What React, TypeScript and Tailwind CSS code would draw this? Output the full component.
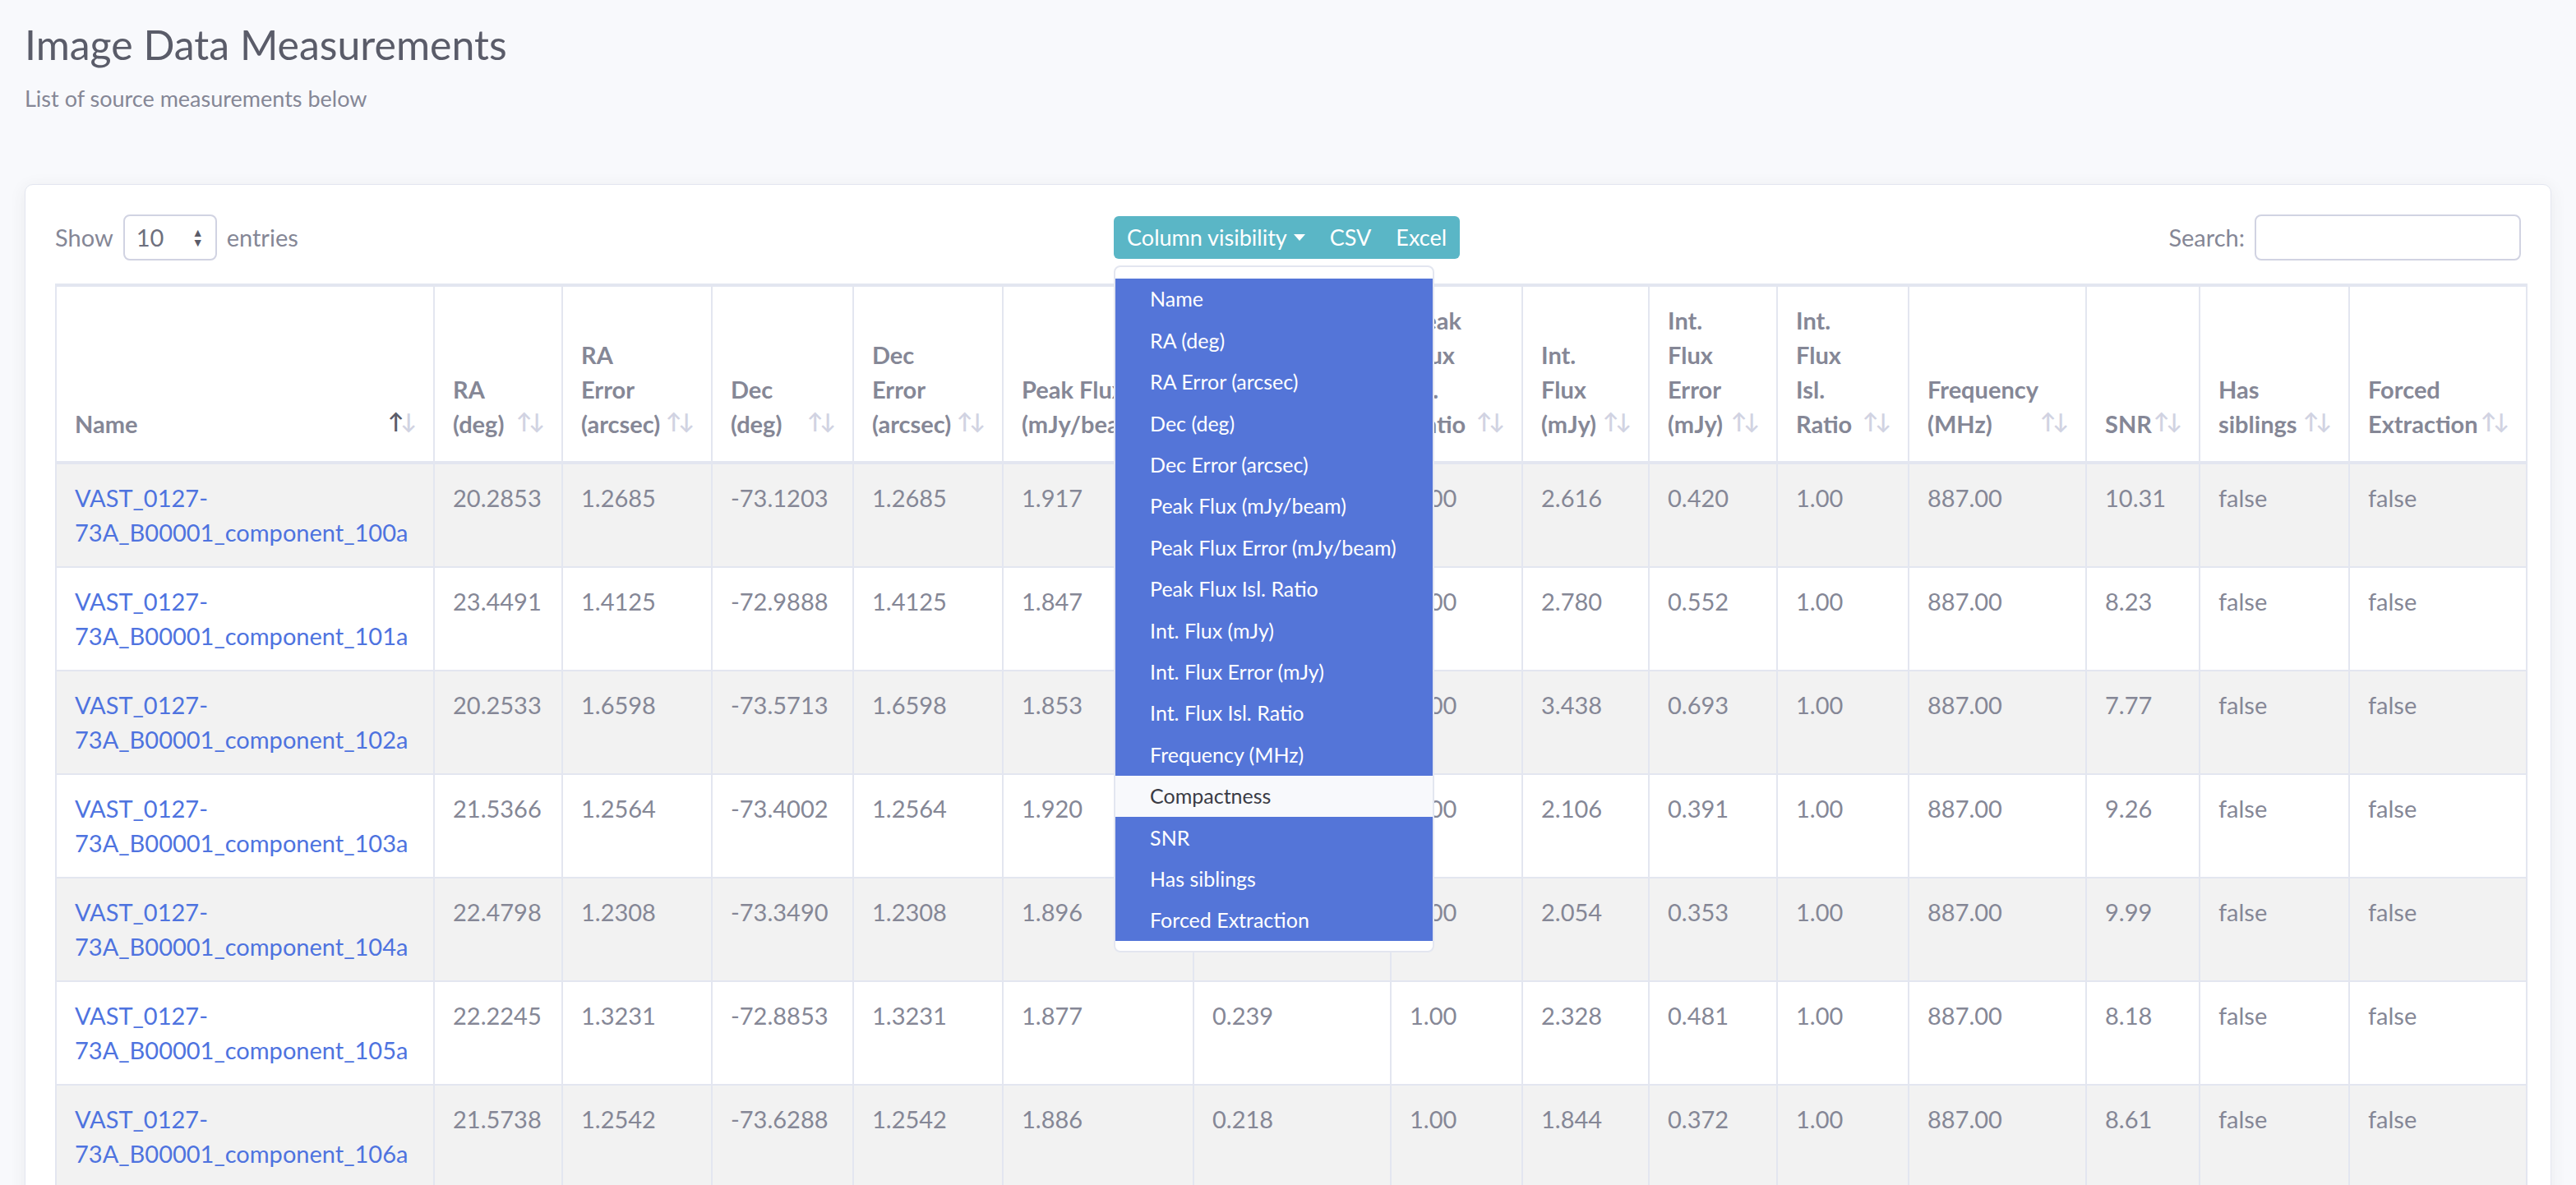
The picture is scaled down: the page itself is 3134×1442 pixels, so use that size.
const cols: { label: string; w: number }[] = [
  { label: 'Name', w: 460 },
  { label: 'RA (deg)', w: 156 },
  { label: 'RA Error (arcsec)', w: 182 },
  { label: 'Dec (deg)', w: 172 },
  { label: 'Dec Error (arcsec)', w: 182 },
  { label: 'Peak Flux (mJy/beam)', w: 232 },
  { label: 'Peak Flux Error (mJy/beam)', w: 240 },
  { label: 'Peak Flux Isl. Ratio', w: 160 },
  { label: 'Int. Flux (mJy)', w: 154 },
  { label: 'Int. Flux Error (mJy)', w: 156 },
  { label: 'Int. Flux Isl. Ratio', w: 160 },
  { label: 'Frequency (MHz)', w: 216 },
  { label: 'SNR', w: 138 },
  { label: 'Has siblings', w: 182 },
  { label: 'Forced Extraction', w: 216 },
];

const rows = [
  ['100a', '20.2853', '1.2685', '-73.1203', '1.2685', '1.917', '0.232', '1.00', '2.616', '0.420', '10.31'],
  ['101a', '23.4491', '1.4125', '-72.9888', '1.4125', '1.847', '0.225', '1.00', '2.780', '0.552', '8.23'],
  ['102a', '20.2533', '1.6598', '-73.5713', '1.6598', '1.853', '0.238', '1.00', '3.438', '0.693', '7.77'],
  ['103a', '21.5366', '1.2564', '-73.4002', '1.2564', '1.920', '0.207', '1.00', '2.106', '0.391', '9.26'],
  ['104a', '22.4798', '1.2308', '-73.3490', '1.2308', '1.896', '0.190', '1.00', '2.054', '0.353', '9.99'],
  ['105a', '22.2245', '1.3231', '-72.8853', '1.3231', '1.877', '0.239', '1.00', '2.328', '0.481', '8.18'],
  ['106a', '21.5738', '1.2542', '-73.6288', '1.2542', '1.886', '0.218', '1.00', '1.844', '0.372', '8.61'],
  ['107a', '21.0112', '1.3310', '-73.2201', '1.3310', '1.902', '0.221', '1.00', '2.210', '0.402', '8.60'],
];

const menu = [
  'Name', 'RA (deg)', 'RA Error (arcsec)', 'Dec (deg)', 'Dec Error (arcsec)', 'Peak Flux (mJy/beam)',
  'Peak Flux Error (mJy/beam)', 'Peak Flux Isl. Ratio', 'Int. Flux (mJy)', 'Int. Flux Error (mJy)',
  'Int. Flux Isl. Ratio', 'Frequency (MHz)', 'Compactness', 'SNR', 'Has siblings', 'Forced Extraction',
];

const SortIcon = ({ active }: { active?: boolean }) => (
  <span className="absolute right-[20px] bottom-[36px] flex text-[26px] leading-none font-bold">
    <span className={active ? 'text-[#5a5c69]' : 'text-[#d1d3e2]'}>↑</span>
    <span className="text-[#d1d3e2] -ml-[4px]">↓</span>
  </span>
);

export default function App() {
  return (
    <div
      className="min-h-screen bg-[#f8f9fc] px-[30px] pt-[24px] text-[#858796]"
      style={{ fontFamily: 'Lato, "Open Sans", sans-serif' }}
    >
      <h1 className="text-[50px] leading-[60px] text-[#5a5c69]">Image Data Measurements</h1>
      <p className="text-[27px] leading-[40px] mt-[16px]">List of source measurements below</p>

      <div className="mt-[84px] bg-white rounded-[10px] border border-[#e3e6f0] shadow-[0_4px_20px_rgba(58,59,69,0.08)] px-[36px] pt-[36px] pb-[40px]">
        <div className="flex items-center justify-between h-[56px] mb-[28px]">
          <div className="flex items-center gap-[12px] text-[29px]">
            <span>Show</span>
            <div className="flex items-center justify-between w-[114px] h-[56px] border-2 border-[#d1d3e2] rounded-[8px] px-[14px] text-[#6e707e]">
              <span>10</span>
              <span className="flex flex-col text-[14px] leading-[12px] text-[#5a5c69]">
                <span>▲</span>
                <span>▼</span>
              </span>
            </div>
            <span>entries</span>
          </div>

          <div className="relative ml-[130px]">
            <div className="flex items-center h-[52px] rounded-[6px] bg-[#5ab6c6] text-white text-[27px] px-[16px] gap-[30px]">
              <span className="flex items-center gap-[8px]">
                Column visibility
                <span className="inline-block w-0 h-0 border-l-[7px] border-r-[7px] border-t-[8px] border-l-transparent border-r-transparent border-t-white" />
              </span>
              <span>CSV</span>
              <span>Excel</span>
            </div>
            <div className="absolute z-10 left-0 top-[60px] w-[390px] bg-white border-2 border-[#e3e6f0] rounded-[8px] pt-[14px] pb-[12px]">
              {menu.map((m) => (
                <div
                  key={m}
                  className={`h-[50.4px] flex items-center pl-[42px] text-[25px] ${m === 'Compactness' ? 'bg-[#f8f9fc] text-[#3a3b45]' : 'bg-[#5475d8] text-white'}`}
                >
                  {m}
                </div>
              ))}
            </div>
          </div>

          <div className="flex items-center gap-[12px] text-[29px]">
            <span>Search:</span>
            <div className="w-[324px] h-[56px] border-2 border-[#d1d3e2] rounded-[8px]" />
          </div>
        </div>

        <table className="table-fixed border-collapse w-[3008px] text-[29px] leading-[42px]">
          <colgroup>
            {cols.map((c) => (
              <col key={c.label} style={{ width: c.w }} />
            ))}
          </colgroup>
          <thead>
            <tr className="border-t-[4px] border-b-[4px] border-[#e3e6f0]">
              {cols.map((c, i) => (
                <th
                  key={c.label}
                  className="relative align-bottom text-left font-bold pl-[22px] pr-[64px] pt-[20px] pb-[24px] h-[216px] border-x-2 border-[#e3e6f0]"
                >
                  {c.label}
                  <SortIcon active={i === 0} />
                </th>
              ))}
            </tr>
          </thead>
          <tbody>
            {rows.map((r, i) => (
              <tr key={r[0]} className={`border-b-2 border-[#e3e6f0] ${i % 2 === 0 ? 'bg-[#f2f2f2]' : 'bg-white'}`}>
                <td className="align-top px-[22px] py-[20px] border-x-2 border-[#e3e6f0] text-[#4e73df]">
                  VAST_0127-
                  <br />
                  73A_B00001_component_{r[0]}
                </td>
                {[...r.slice(1, 10), '1.00', '887.00', r[10], 'false', 'false'].map((v, j) => (
                  <td key={j} className="align-top px-[22px] py-[20px] border-x-2 border-[#e3e6f0]">
                    {v}
                  </td>
                ))}
              </tr>
            ))}
          </tbody>
        </table>
      </div>
    </div>
  );
}
